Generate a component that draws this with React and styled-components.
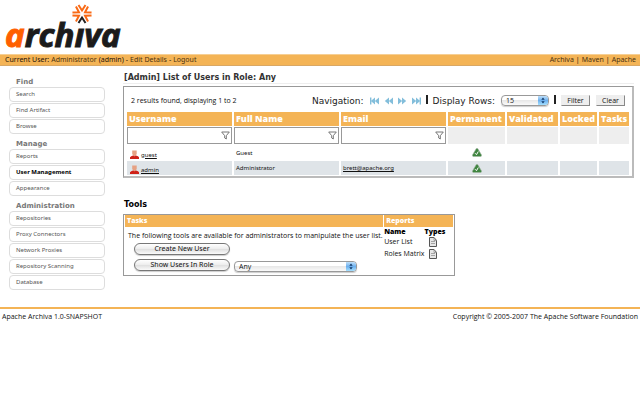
import React from "react";
import styled, { createGlobalStyle, css } from "styled-components";

const ORANGE = "#f4b456";
const BODY_FONT = `"Open Sans", Verdana, sans-serif`;
const MENU_FONT = `"Noto Sans", Verdana, sans-serif`;
const TITLE_FONT = `"DejaVu Sans", Verdana, sans-serif`;

const GlobalStyle = createGlobalStyle`
  * { box-sizing: border-box; }
  body {
    margin: 0;
    background: #fff;
    color: #111;
    font: 7px/8px ${BODY_FONT};
  }
  a { color: inherit; }
`;

const Banner = styled.header`
  display: flex;
  height: 54px;
  padding: 2px 4px;
  svg { overflow: visible; }
`;

const TopBar = styled.nav`
  display: flex;
  justify-content: space-between;
  align-items: center;
  height: 12px;
  padding: 0 4px 0 5px;
  color: #4a3210;
  background: ${ORANGE};
  border-top: 1px solid #f6cf94;
  border-bottom: 1px solid #d9a865;
  font-family: ${MENU_FONT};
`;

const BarGroup = styled.div`
  display: flex;
  gap: 2px;
  a { text-decoration: none; }
`;

const BarText = styled.span`
  color: #1c1206;
`;

const Page = styled.div`
  display: flex;
  padding: 7px 6px 0 9px;
`;

const Sidebar = styled.nav`
  flex: none;
  width: 96px;
  margin-right: 18px;
  padding-top: 4px;
`;

const MenuGroup = styled.section`
  margin-bottom: 5px;
`;

const MenuTitle = styled.h2`
  margin: 0;
  padding-left: 7px;
  color: #777;
  font: bold 7px/10px ${TITLE_FONT};
`;

const MenuList = styled.ul`
  display: grid;
  gap: 1px;
  margin: 0;
  padding: 0;
  list-style: none;
`;

const MenuLink = styled.a`
  display: block;
  height: 15px;
  padding: 0 6px;
  border: 1px solid #ddd;
  border-radius: 4px;
  color: ${(p) => (p.$active ? "#000" : "#555")};
  font-family: ${MENU_FONT};
  font-weight: ${(p) => (p.$active ? "bold" : "normal")};
  font-size: 6px;
  line-height: 12px;
  text-decoration: none;
`;

const Content = styled.main`
  flex: 1;
  min-width: 0;
`;

const PageTitle = styled.h1`
  margin: 0 0 2px;
  padding: 0 0 1px 1px;
  border-bottom: 1px solid #eee;
  color: #333;
  font: bold 8px/9px ${TITLE_FONT};
`;

const Panel = styled.section`
  border: 1px solid #999;
  border-right: 2px solid #bbb;
  border-bottom: 2px solid #bbb;
  padding: 7px 1px 0;
`;

const Controls = styled.form`
  display: flex;
  align-items: center;
  height: 13px;
  margin: 0 6px 4px;
`;

const Summary = styled.span`
  margin-right: auto;
`;

const ControlLabel = styled.label`
  color: #222;
  font: 9px/12px ${TITLE_FONT};
`;

const Pager = styled.div`
  display: flex;
  gap: 5px;
  margin: 0 5px 0 6px;
`;

const PagerButton = styled.button`
  display: flex;
  padding: 0;
  border: 0;
  background: none;
`;

const Divider = styled.span`
  width: 2px;
  height: 9px;
  margin-right: 5px;
  margin-bottom: 2px;
  background: #222;
`;

const FlatButton = styled.button`
  width: 29px;
  height: 11px;
  margin-left: ${(p) => p.$gap || "0"};
  padding: 0;
  border: 1px solid #eee;
  border-right-color: #888;
  border-bottom-color: #888;
  background: #eee;
  color: #111;
  font: 7px/8px ${BODY_FONT};
`;

const SelectBox = styled.span`
  display: grid;
  grid-template-columns: 1fr 10px;
  width: ${(p) => p.$width};
  height: 11px;
  margin: ${(p) => p.$margin || "0"};
  border: 1px solid #999;
  border-radius: 4px;
  background: linear-gradient(#fff 45%, #e8e8e8 50%, #fafafa);
  box-shadow: 0 1px 1px #ccc;
  overflow: hidden;
  select, svg { grid-row: 1; }
  select {
    grid-column: 1 / 3;
    min-width: 0;
    padding: 0 4px;
    border: 0;
    background: none;
    color: #111;
    appearance: none;
    font: 7px/9px ${BODY_FONT};
  }
  svg {
    grid-column: 2;
    pointer-events: none;
    background: linear-gradient(#bfe0fb, #6db0ee 50%, #a5e0ff);
  }
`;

const UserTable = styled.table`
  width: 100%;
  table-layout: fixed;
  border-spacing: 2px 1px;
  th, td { padding: 0 2px; text-align: left; }
`;

const HeadCell = styled.th`
  width: ${(p) => p.$width || "auto"};
  height: 14px;
  background: ${ORANGE};
  color: #fff;
  font: 800 9px/12px ${BODY_FONT};
`;

const FilterRow = styled.tr`
  height: 17px;
  && td {
    padding: 0;
    background: #eee;
  }
`;

const FilterField = styled.label`
  display: flex;
  align-items: center;
  height: 17px;
  padding-right: 1px;
  border: 1px solid #999;
  background: #fff;
  input {
    flex: 1;
    min-width: 0;
    padding: 0 2px;
    border: 0;
    outline: 0;
    background: none;
    font: 7px/8px ${BODY_FONT};
  }
`;

const UserRow = styled.tr`
  height: ${(p) => (p.$shaded ? "14px" : "15px")};
  ${(p) => p.$shaded && css`td { background: #dfe4e8; }`}
  td { font: 6px/8px ${MENU_FONT}; }
`;

const UserName = styled.span`
  display: flex;
  align-items: flex-end;
  gap: 2px;
  padding: 3px 0 0 1px;
  a { line-height: 7px; }
`;

const Mark = styled.span`
  display: flex;
  justify-content: center;
`;

const ToolsTitle = styled.h2`
  margin: 21px 0 3px;
  padding-left: 1px;
  color: #000;
  font: bold 8px/12px ${TITLE_FONT};
`;

const ToolsPanel = styled.section`
  display: grid;
  grid-template: 12px 1fr / minmax(0, 1fr) 69px;
  column-gap: 1px;
  width: 65%;
  min-width: 332px;
  min-height: 62px;
  padding: 0 1px;
  border: 1px solid #999;
`;

const ToolsHeading = styled.h3`
  margin: 0;
  padding: 0 2px;
  background: ${ORANGE};
  color: #fff;
  font: 800 7px/12px ${BODY_FONT};
`;

const TasksBody = styled.div`
  padding: 5px 3px 0;
  white-space: nowrap;
  p { margin: 0 0 1px; line-height: 8px; }
`;

const TaskLine = styled.div`
  display: flex;
  align-items: center;
  height: 16px;
  padding-left: 6px;
`;

const PillButton = styled.button`
  width: 96px;
  height: 12px;
  padding: 0;
  border: 1px solid #777;
  border-radius: 6px;
  background: linear-gradient(#fff, #eee 45%, #dedede 50%, #fafafa);
  box-shadow: 0 1px 1px #ccc;
  color: #111;
  font: 7px/8px ${MENU_FONT};
`;

const ReportTable = styled.table`
  width: 66px;
  margin-top: 1px;
  border-collapse: collapse;
  th, td { padding: 0; text-align: left; white-space: nowrap; }
  th { height: 8px; color: #000; font: 800 7px/8px ${BODY_FONT}; }
  td { height: 12px; }
  th + th { width: 26px; }
  td + td { padding-left: 4px; }
  svg { display: block; }
`;

const Footer = styled.footer`
  display: flex;
  justify-content: space-between;
  margin-top: 12px;
  padding: 4px 2px;
  border-top: 2px solid ${ORANGE};
`;

const Logo = () => (
  <svg width="124" height="50" viewBox="0 0 124 50" role="img" aria-label="archiva">
    <text x="1" y="45" fontFamily="Open Sans, sans-serif" fontSize="33" fontWeight="700" fontStyle="italic" fill="#1b1b1b" stroke="#1b1b1b">
      <tspan fill="#ff6000" stroke="#ff6000">a</tspan>rchıva
    </text>
    <g fill="none" stroke="#f96a16" strokeWidth="2">
      {[0, 60, 120, 180, 240, 300].map((angle) => (
        <path
          key={angle}
          d="M74.500 3l3.500 5.500L81.500 3"
          transform={`rotate(${angle} 78 12)`}
          stroke={angle === 180 ? "#222" : undefined}
        />
      ))}
    </g>
  </svg>
);

const PagerIcon = ({ forward, end }) => (
  <svg width="9" height="8" viewBox="0 0 9 8" fill="#83bedb">
    <g transform={forward ? undefined : "matrix(-1 0 0 1 9 0)"}>
      <path d="M0 .5l4.200 3.500L0 7.500zM4 .5l4.200 3.500L4 7.500z" />
      {end && <path d="M7.600.500H9v7H7.600z" />}
    </g>
  </svg>
);

const SelectArrows = () => (
  <svg width="10" height="9" viewBox="0 0 10 9" fill="#123a6a" aria-hidden="true">
    <path d="M5 1.500l1.700 2.200H3.300zM5 7.500L3.300 5.300h3.400z" />
  </svg>
);

const FunnelIcon = () => (
  <svg width="9" height="9" viewBox="0 0 9 9" fill="#fff" stroke="#777" aria-hidden="true">
    <path d="M.7 1h7.600L5.300 4.700V8L3.700 7V4.700z" />
  </svg>
);

const PersonIcon = () => (
  <svg width="9" height="9" viewBox="0 0 9 9" aria-hidden="true">
    <path d="M2.200.400h4.500v3.600L5.500 6h-2L2.200 4z" fill="#e6a183" />
    <path d="M0 9V7.300Q1 6 3 5.500l1.500.8L6 5.500Q8.500 6 9 7.300V9z" fill="#cf2118" />
  </svg>
);

const CheckIcon = () => (
  <svg width="10" height="9" viewBox="0 0 10 9" aria-label="Yes">
    <path d="M4.300.500h1.400L9.700 7.300 9 8.600H1L.3 7.300z" fill="#3f8540" stroke="#a3b5a3" strokeWidth=".6" />
    <path d="M3 5.200l1.500 1.500L6.300 3.500" fill="none" stroke="#fff" />
  </svg>
);

const DocIcon = () => (
  <svg width="8" height="10" viewBox="0 0 8 10" aria-hidden="true">
    <path d="M.5.500h4.500l2.500 2.800v6.200h-7z" fill="#e6e6e6" stroke="#555" />
    <path d="M5 .5v3h2.500M2 4.500h4M2 6.500h4" fill="none" stroke="#888" strokeWidth=".7" />
  </svg>
);

const MENU = [
  ["Find", ["Search", "Find Artifact", "Browse"]],
  ["Manage", ["Reports", "User Management", "Appearance"]],
  ["Administration", ["Repositories", "Proxy Connectors", "Network Proxies", "Repository Scanning", "Database"]],
];

const COLUMNS = [
  ["Username"],
  ["Full Name"],
  ["Email"],
  ["Permanent", "57px"],
  ["Validated", "51px"],
  ["Locked", "37px"],
  ["Tasks", "30px"],
];

const USERS = [
  { name: "guest", full: "Guest" },
  { name: "admin", full: "Administrator", email: "brett@apache.org" },
];

const PAGES = [
  ["First page", false, true],
  ["Previous page", false, false],
  ["Next page", true, false],
  ["Last page", true, true],
];

export default function App() {
  return (
    <>
      <GlobalStyle />
      <Banner><Logo /></Banner>
      <TopBar>
        <BarGroup>
          <BarText>Current User:</BarText>
          <a href="#account">Administrator</a>
          <BarText>(admin)</BarText>
          <BarText>-</BarText>
          <a href="#edit">Edit Details</a>
          <BarText>-</BarText>
          <a href="#logout">Logout</a>
        </BarGroup>
        <BarGroup>
          <a href="#archiva">Archiva</a>
          <BarText>|</BarText>
          <a href="#maven">Maven</a>
          <BarText>|</BarText>
          <a href="#apache">Apache</a>
        </BarGroup>
      </TopBar>
      <Page>
        <Sidebar>
          {MENU.map(([title, items]) => (
            <MenuGroup key={title}>
              <MenuTitle>{title}</MenuTitle>
              <MenuList>
                {items.map((item) => (
                  <li key={item}>
                    <MenuLink href="#menu" $active={item === "User Management"}>{item}</MenuLink>
                  </li>
                ))}
              </MenuList>
            </MenuGroup>
          ))}
        </Sidebar>
        <Content>
          <PageTitle>[Admin] List of Users in Role: Any</PageTitle>
          <Panel>
            <Controls>
              <Summary>2 results found, displaying 1 to 2</Summary>
              <ControlLabel as="span">Navigation:</ControlLabel>
              <Pager>
                {PAGES.map(([label, forward, end]) => (
                  <PagerButton key={label} type="button" aria-label={label}>
                    <PagerIcon forward={forward} end={end} />
                  </PagerButton>
                ))}
              </Pager>
              <Divider />
              <ControlLabel htmlFor="rows">Display Rows:</ControlLabel>
              <SelectBox $width="48px" $margin="0 5px 0 6px">
                <select id="rows"><option>15</option></select>
                <SelectArrows />
              </SelectBox>
              <Divider />
              <FlatButton type="button">Filter</FlatButton>
              <FlatButton type="button" $gap="6px">Clear</FlatButton>
            </Controls>
            <UserTable>
              <thead>
                <tr>
                  {COLUMNS.map(([label, width]) => <HeadCell key={label} $width={width}>{label}</HeadCell>)}
                </tr>
              </thead>
              <tbody>
                <FilterRow>
                  {COLUMNS.map(([label, width]) => (
                    <td key={label}>
                      {!width && <FilterField><input aria-label={label} /><FunnelIcon /></FilterField>}
                    </td>
                  ))}
                </FilterRow>
                {USERS.map((user, i) => (
                  <UserRow key={user.name} $shaded={i % 2 === 1}>
                    <td><UserName><PersonIcon /><a href="#user">{user.name}</a></UserName></td>
                    <td>{user.full}</td>
                    <td>{user.email && <a href="#mail">{user.email}</a>}</td>
                    <td><Mark><CheckIcon /></Mark></td>
                    <td /><td /><td />
                  </UserRow>
                ))}
              </tbody>
            </UserTable>
          </Panel>
          <ToolsTitle>Tools</ToolsTitle>
          <ToolsPanel>
            <ToolsHeading>Tasks</ToolsHeading>
            <ToolsHeading>Reports</ToolsHeading>
            <TasksBody>
              <p>The following tools are available for administrators to manipulate the user list.</p>
              <TaskLine><PillButton type="button">Create New User</PillButton></TaskLine>
              <TaskLine>
                <PillButton type="button">Show Users In Role</PillButton>
                <SelectBox $width="123px" $margin="2px 0 0 4px">
                  <select aria-label="Role"><option>Any</option></select>
                  <SelectArrows />
                </SelectBox>
              </TaskLine>
            </TasksBody>
            <div>
              <ReportTable>
                <thead><tr><th>Name</th><th>Types</th></tr></thead>
                <tbody>
                  <tr><td>User List</td><td><DocIcon /></td></tr>
                  <tr><td>Roles Matrix</td><td><DocIcon /></td></tr>
                </tbody>
              </ReportTable>
            </div>
          </ToolsPanel>
        </Content>
      </Page>
      <Footer>
        <span>Apache Archiva 1.0-SNAPSHOT</span>
        <span>Copyright © 2005-2007 The Apache Software Foundation</span>
      </Footer>
    </>
  );
}
